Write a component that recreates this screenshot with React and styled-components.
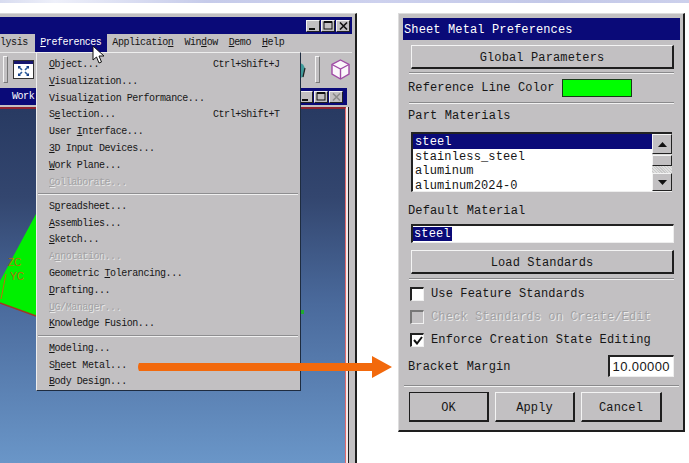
import React from 'react';
import styled, { createGlobalStyle } from 'styled-components';

const GlobalStyle = createGlobalStyle`
  html, body {
    margin: 0;
    background: #fff;
    overflow: hidden;
  }
`;

const Page = styled.div`
  position: relative;
  width: 689px;
  height: 463px;
  overflow: hidden;
  font-family: "Liberation Mono", "DejaVu Sans Mono", monospace;
  color: #161616;
`;
const TopBand = styled.div`
  height: 3px;
  background: linear-gradient(90deg, #d8dcf0 0, #eef0fa 8%, #c6cbea 30%, #cdd1ee 55%, #c3c8e8 80%, #ccd0ec 100%);
`;
const Stage = styled.div`
  display: flex;
  align-items: flex-start;
  gap: 41px;
  padding-top: 10px;
`;

/* main application window */
const AppWindow = styled.div`
  width: 357px;
  height: 450px;
  box-sizing: border-box;
  flex: none;
  background: #c2c0c2;
  border-top: 1px solid #d8d8d8;
  border-right: 2px solid #1e1e1e;
  padding-top: 3px;
  display: flex;
  flex-direction: column;
`;
const AppTitle = styled.div`
  height: 17px;
  margin-right: 3px;
  background: #0a0a78;
  display: flex;
  align-items: center;
  justify-content: flex-end;
  gap: 1px;
  padding-right: 2px;
`;
const WinButton = styled.div`
  width: 14px;
  height: 12px;
  box-sizing: border-box;
  background: #c2c0c2;
  border: 1px solid;
  border-color: #f4f4f4 #222 #222 #f4f4f4;
  display: flex;
  align-items: center;
  justify-content: center;
  svg { display: block; }
`;
const MenuBar = styled.div`
  height: 18px;
  display: flex;
  overflow: hidden;
  font-size: 10px;
  letter-spacing: -0.45px;
`;
const MenuItem = styled.div`
  padding: ${p => p.$first ? '0 7px 0 0' : '0 5.5px'};
  line-height: 18px;
  white-space: nowrap;
  background: ${p => p.$active ? '#0a0a78' : 'transparent'};
  color: ${p => p.$active ? '#fff' : '#161616'};
`;
const Mnemonic = styled.span`
  text-decoration: underline;
  text-underline-offset: 1px;
`;
const Toolbar = styled.div`
  height: 33px;
  margin-right: 3px;
  display: flex;
  align-items: center;
  border-top: 1px solid #e8e8e8;
  box-sizing: border-box;
  padding-left: 3px;
`;
const Grip = styled.div`
  width: 3px;
  height: 25px;
  border: 1px solid;
  border-color: #f4f4f4 #777 #777 #f4f4f4;
  margin-right: ${p => p.$gap || 0}px;
  flex: none;
`;
const ToolIcon = styled.svg`
  display: block;
  flex: none;
  margin-right: ${p => p.$gap || 0}px;
`;
const Spacer = styled.div`
  flex: 1;
`;
const ChildWindow = styled.div`
  flex: 1;
  margin: 3px 8px 0 0;
  display: flex;
  flex-direction: column;
  min-height: 0;
`;
const ChildTitle = styled.div`
  height: 17px;
  flex: none;
  background: #0a0a78;
  color: #fff;
  font-size: 10px;
  letter-spacing: -0.45px;
  line-height: 17px;
  display: flex;
  align-items: center;
  padding: 0 4px 0 12px;
  gap: 1px;
`;
const Viewport = styled.div`
  position: relative;
  flex: 1;
  margin: 2px 1px 0 0;
  border-top: 2px solid #8e2230;
  border-right: 1px solid #e06a6e;
  box-shadow: 2px 0 0 #f4e8e8, 3px 0 0 #222;
  background: linear-gradient(180deg, #283a62 0, #33466f 25%, #4a6a9c 55%, #6a96c8 100%);
`;
const Model = styled.svg`
  position: absolute;
  left: 0;
  top: 0;
`;
const AxisLabel = styled.span`
  position: absolute;
  left: ${p => p.$x}px;
  top: ${p => p.$y}px;
  font: 10px "Liberation Sans", sans-serif;
  color: #b86a10;
`;

/* dropped down menu, lies over the window */
const Dropdown = styled.div`
  position: absolute;
  left: 36px;
  top: 52px;
  width: 265px;
  height: 339px;
  box-sizing: border-box;
  background: #c2c0c2;
  border: 1px solid;
  border-color: #eee #1e2c40 #1e2c40 #eee;
  padding: 4px 0 0 12px;
  font-size: 10px;
  letter-spacing: -0.45px;
`;
const DropRow = styled.div`
  height: 16.8px;
  line-height: 16.8px;
  display: flex;
  white-space: nowrap;
  color: ${p => p.$off ? '#a2a2a4' : '#161616'};
  text-shadow: ${p => p.$off ? '1px 1px 0 #e8e8e8' : 'none'};
`;
const Shortcut = styled.span`
  position: absolute;
  left: 176px;
`;
const DropSep = styled.div`
  height: 2px;
  margin: 2px 2px 3.5px -11px;
  background: #8e8e90;
  border-bottom: 1px solid #f0f0f0;
  box-sizing: border-box;
`;

const Cursor = styled.svg`
  position: absolute;
  left: 92px;
  top: 45px;
`;
const Arrow = styled.svg`
  position: absolute;
  left: 136px;
  top: 354px;
`;

/* sheet metal preferences dialog */
const Dialog = styled.div`
  width: 287px;
  height: 419px;
  flex: none;
  box-sizing: border-box;
  background: #c2c0c2;
  border: 1px solid;
  border-width: 1px 2px 2px 1px;
  border-color: #ddd #1e1e1e #1e1e1e #ddd;
  padding: 4px 3px 0 4px;
  font-size: 12px;
  letter-spacing: 0.13px;
  display: flex;
  flex-direction: column;
`;
const DialogTitle = styled.div`
  height: 22px;
  flex: none;
  background: #0a0a78;
  color: #fff;
  line-height: 24px;
  padding-left: 1px;
`;
const DialogBody = styled.div`
  padding: 5px 6px 0 8px;
  display: flex;
  flex-direction: column;
`;
const RaisedButton = styled.div`
  height: ${p => p.$h || 24}px;
  width: ${p => p.$w ? p.$w + 'px' : 'auto'};
  box-sizing: border-box;
  border: 1px solid;
  border-width: 1px 2px 2px 1px;
  border-color: #f4f4f4 #1e1e1e #1e1e1e #f4f4f4;
  outline: ${p => p.$primary ? '1px solid #1e1e1e' : 'none'};
  outline-offset: -1px;
  padding-top: 3px;
  display: flex;
  align-items: center;
  justify-content: center;
  flex: none;
`;
const Separator = styled.div`
  height: 2px;
  margin: ${p => p.$m || '3px 0 0 -2px'};
  background: #8a8a8c;
  border-bottom: 1px solid #f2f2f2;
  box-sizing: border-box;
  flex: none;
`;
const ColorRow = styled.div`
  height: 26px;
  margin: 1px 0 0 -3px;
  display: flex;
  align-items: center;
  gap: 7px;
`;
const Swatch = styled.div`
  width: 70px;
  height: 18px;
  box-sizing: border-box;
  background: #00ff00;
  border: 1px solid #1a3a1a;
`;
const Label = styled.div`
  height: ${p => p.$h}px;
  box-sizing: border-box;
  padding-top: ${p => p.$top}px;
  margin: 0 0 ${p => p.$bottom || 0}px -3px;
  line-height: ${p => p.$h - p.$top}px;
  flex: none;
`;
const ListBox = styled.div`
  height: 60px;
  width: 261px;
  box-sizing: border-box;
  background: #fff;
  border: 1px solid;
  border-width: 2px 0 1px 2px;
  border-color: #222 #eee #eee #222;
  display: flex;
  flex: none;
`;
const ListRows = styled.div`
  flex: 1;
  min-width: 0;
`;
const ListRow = styled.div`
  height: 14.6px;
  line-height: 16.6px;
  padding-left: 2px;
  background: ${p => p.$on ? '#0a0a78' : 'transparent'};
  color: ${p => p.$on ? '#fff' : '#161616'};
`;
const ScrollBar = styled.div`
  width: 20px;
  flex: none;
  display: flex;
  flex-direction: column;
  background: #dcdcdc;
  justify-content: space-between;
`;
const ScrollButton = styled.div`
  height: ${p => p.$h}px;
  background: #c2c0c2;
  box-sizing: border-box;
  border: 1px solid;
  border-color: #f4f4f4 #222 #222 #f4f4f4;
  display: flex;
  align-items: center;
  justify-content: center;
`;
const ScrollThumb = styled(ScrollButton)`
  margin-top: 1px;
`;
const ScrollTrack = styled.div`
  flex: 1;
  background: repeating-linear-gradient(45deg, #e0e0e0 0 1px, #c8c8c8 1px 2px);
`;
const TextField = styled.div`
  height: 19px;
  box-sizing: border-box;
  background: #fff;
  border: 1px solid;
  border-color: #222 #eee #eee #222;
  border-width: 2px 1px 1px 2px;
  padding-top: 1px;
  flex: none;
  margin-bottom: 7px;
`;
const Selected = styled.span`
  background: #0a0a78;
  color: #fff;
  display: block;
  width: fit-content;
  height: 14px;
  line-height: 15px;
  padding: 0 1px;
`;
const CheckRow = styled.div`
  height: 23px;
  display: flex;
  align-items: center;
  gap: 7px;
  margin-left: -1px;
  color: ${p => p.$off ? '#a2a2a4' : '#161616'};
  text-shadow: ${p => p.$off ? '1px 1px 0 #ececec' : 'none'};
`;
const CheckBox = styled.div`
  width: 14px;
  height: 14px;
  box-sizing: border-box;
  background: ${p => p.$off ? '#c2c0c2' : '#fff'};
  border: 1px solid;
  border-width: 2px 1px 1px 2px;
  border-color: ${p => p.$off ? '#777' : '#222'} #f0f0f0 #f0f0f0 ${p => p.$off ? '#777' : '#222'};
  display: flex;
  align-items: center;
  justify-content: center;
  flex: none;
`;
const MarginRow = styled.div`
  height: 22px;
  margin: 4px 0 0 -3px;
  display: flex;
  align-items: center;
  justify-content: space-between;
`;
const MarginLabel = styled.span`
  padding-top: 2px;
`;
const NumberField = styled.div`
  width: 66px;
  height: 22px;
  box-sizing: border-box;
  background: #fff;
  border: 1px solid;
  border-width: 2px 1px 1px 2px;
  border-color: #222 #eee #eee #222;
  font: 13px "Liberation Sans", sans-serif;
  letter-spacing: 0.4px;
  line-height: 19px;
  text-align: right;
  padding-right: 3px;
`;
const DialogActions = styled.div`
  display: flex;
  gap: 6px;
  padding: 5px 0 0 6px;
`;

const Underlined = ({ text, at }) => (
  <span>
    {text.slice(0, at)}<Mnemonic>{text[at]}</Mnemonic>{text.slice(at + 1)}
  </span>
);

const WinGlyph = ({ kind, off }) => {
  const c = off ? '#8c8c8c' : '#111';
  if (kind === 'min') return <svg width="8" height="8"><rect x="0" y="6" width="6" height="2" fill={c} /></svg>;
  if (kind === 'max') return <svg width="10" height="9"><rect x="1" y="1" width="8" height="7" fill="none" stroke={c} strokeWidth="1" /><rect x="1" y="0" width="8" height="2" fill={c} /></svg>;
  return <svg width="9" height="8"><path d="M1 0.5 L8 7.5 M8 0.5 L1 7.5" stroke={c} strokeWidth="1.6" /></svg>;
};

const firstGroup = [
  ['Object...', 0, 'Ctrl+Shift+J'],
  ['Visualization...', 0],
  ['Visualization Performance...', 7],
  ['Selection...', 1, 'Ctrl+Shift+T'],
  ['User Interface...', 5],
  ['3D Input Devices...', 0],
  ['Work Plane...', 0],
  ['Collaborate...', 0, null, true],
];
const secondGroup = [
  ['Spreadsheet...', 1],
  ['Assemblies...', 0],
  ['Sketch...', 0],
  ['Annotation...', 1, null, true],
  ['Geometric Tolerancing...', 10],
  ['Drafting...', 0],
  ['UG/Manager...', 0, null, true],
  ['Knowledge Fusion...', 0],
];
const thirdGroup = [
  ['Modeling...', 0],
  ['Sheet Metal...', 1],
  ['Body Design...', 0],
];

const renderRows = rows => rows.map(([text, at, shortcut, off]) => (
  <DropRow key={text} $off={off}>
    <Underlined text={text} at={at} />
    {shortcut && <Shortcut>{shortcut}</Shortcut>}
  </DropRow>
));

const App = () => (
  <Page>
    <GlobalStyle />
    <TopBand />
    <Stage>
      <AppWindow>
        <AppTitle>
          <WinButton><WinGlyph kind="min" /></WinButton>
          <WinButton><WinGlyph kind="max" /></WinButton>
          <WinButton><WinGlyph kind="close" /></WinButton>
        </AppTitle>
        <MenuBar>
          <MenuItem $first>lysis</MenuItem>
          <MenuItem $active><Underlined text="Preferences" at={0} /></MenuItem>
          <MenuItem><Underlined text="Application" at={10} /></MenuItem>
          <MenuItem><Underlined text="Window" at={3} /></MenuItem>
          <MenuItem><Underlined text="Demo" at={0} /></MenuItem>
          <MenuItem><Underlined text="Help" at={0} /></MenuItem>
        </MenuBar>
        <Toolbar>
          <Grip $gap={5} />
          <ToolIcon width="21" height="19" viewBox="0 0 21 19">
            <rect x="0.5" y="0.5" width="20" height="18" fill="#fff" stroke="#333" />
            <rect x="1" y="1" width="19" height="3" fill="#16166e" />
            <path d="M6 7 L9 10 M15 7 L12 10 M6 15 L9 12 M15 15 L12 12" stroke="#2a5a9a" strokeWidth="1.6" />
            <path d="M5 6h3l-3 3z M16 6h-3l3 3z M5 16h3l-3-3z M16 16h-3l3-3z" fill="#16408a" />
          </ToolIcon>
          <Spacer />
          <ToolIcon width="6" height="20" $gap={9} viewBox="0 0 6 20">
            <path d="M0 4 A6 8 0 0 1 5 10 L3 18 L0 19 Z" fill="#3f9a9a" />
            <path d="M5 9 L3 18" stroke="#222" strokeWidth="1.2" />
          </ToolIcon>
          <Grip $gap={11} />
          <ToolIcon width="19" height="21" $gap={2} viewBox="0 0 19 21">
            <path d="M9.5 1 L18 5.5 V15 L9.5 20 L1 15 V5.5 Z" fill="#fbf6fb" stroke="#a04aa6" strokeWidth="1.4" />
            <path d="M1 5.5 L9.5 10 L18 5.5 M9.5 10 V20" fill="none" stroke="#a04aa6" strokeWidth="1.4" />
          </ToolIcon>
        </Toolbar>
        <ChildWindow>
          <ChildTitle>
            <span>Work</span>
            <Spacer />
            <WinButton><WinGlyph kind="min" /></WinButton>
            <WinButton><WinGlyph kind="max" /></WinButton>
            <WinButton><WinGlyph kind="close" off /></WinButton>
          </ChildTitle>
          <Viewport>
            <Model width="345" height="250" viewBox="0 0 345 250">
              <polygon points="36,105 36,207 0,194 0,172" fill="#00f000" />
              <path d="M0 194 L36 207" stroke="#a03a20" strokeWidth="1.4" />
              <path d="M1 190 L6 165" stroke="#c06a10" strokeWidth="1" />
              <rect x="301" y="201" width="3" height="4" fill="#1faa30" />
            </Model>
            <AxisLabel $x={8} $y={148}>ZC</AxisLabel>
            <AxisLabel $x={10} $y={162}>YC</AxisLabel>
          </Viewport>
        </ChildWindow>
      </AppWindow>
      <Dialog>
        <DialogTitle>Sheet Metal Preferences</DialogTitle>
        <DialogBody>
          <RaisedButton>Global Parameters</RaisedButton>
          <Separator $m="3px 0 0 -2px" />
          <ColorRow>
            <span>Reference Line Color</span>
            <Swatch />
          </ColorRow>
          <Separator $m="1px 0 0 -2px" />
          <Label $h={22} $top={3} $bottom={6}>Part Materials</Label>
          <ListBox>
            <ListRows>
              <ListRow $on>steel</ListRow>
              <ListRow>stainless_steel</ListRow>
              <ListRow>aluminum</ListRow>
              <ListRow>aluminum2024-0</ListRow>
            </ListRows>
            <ScrollBar>
              <ScrollButton $h={20}>
                <svg width="9" height="5"><path d="M4.5 0 L9 5 H0 Z" fill="#111" /></svg>
              </ScrollButton>
              <ScrollThumb $h={11} />
              <ScrollTrack />
              <ScrollButton $h={18}>
                <svg width="9" height="5"><path d="M0 0 H9 L4.5 5 Z" fill="#111" /></svg>
              </ScrollButton>
            </ScrollBar>
          </ListBox>
          <Label $h={32} $top={7}>Default Material</Label>
          <TextField><Selected>steel</Selected></TextField>
          <RaisedButton>Load Standards</RaisedButton>
          <Separator $m="4px 0 2px -2px" />
          <CheckRow>
            <CheckBox />
            <span>Use Feature Standards</span>
          </CheckRow>
          <CheckRow $off>
            <CheckBox $off />
            <span>Check Standards on Create/Edit</span>
          </CheckRow>
          <CheckRow>
            <CheckBox>
              <svg width="10" height="9"><path d="M1 4 L4 7.5 L9 1" fill="none" stroke="#111" strokeWidth="2" /></svg>
            </CheckBox>
            <span>Enforce Creation State Editing</span>
          </CheckRow>
          <MarginRow>
            <MarginLabel>Bracket Margin</MarginLabel>
            <NumberField>10.00000</NumberField>
          </MarginRow>
        </DialogBody>
        <Separator $m="8px 1px 0" />
        <DialogActions>
          <RaisedButton $w={80} $h={30} $primary>OK</RaisedButton>
          <RaisedButton $w={80} $h={30}>Apply</RaisedButton>
          <RaisedButton $w={81} $h={30}>Cancel</RaisedButton>
        </DialogActions>
      </Dialog>
    </Stage>
    <Dropdown>
      {renderRows(firstGroup)}
      <DropSep />
      {renderRows(secondGroup)}
      <DropSep />
      {renderRows(thirdGroup)}
    </Dropdown>
    <Cursor width="14" height="20" viewBox="0 0 14 20">
      <path d="M1 1 L1 15 L4.5 12 L7 18 L9.5 17 L7 11 L12 11 Z" fill="#fff" stroke="#111" strokeWidth="1" />
    </Cursor>
    <Arrow width="258" height="26" viewBox="0 0 258 26">
      <path d="M3 9 H236 V2 L256 13 L236 24 V17 H3 Q1 13 3 9 Z" fill="#f2690c" />
    </Arrow>
  </Page>
);

export default App;
